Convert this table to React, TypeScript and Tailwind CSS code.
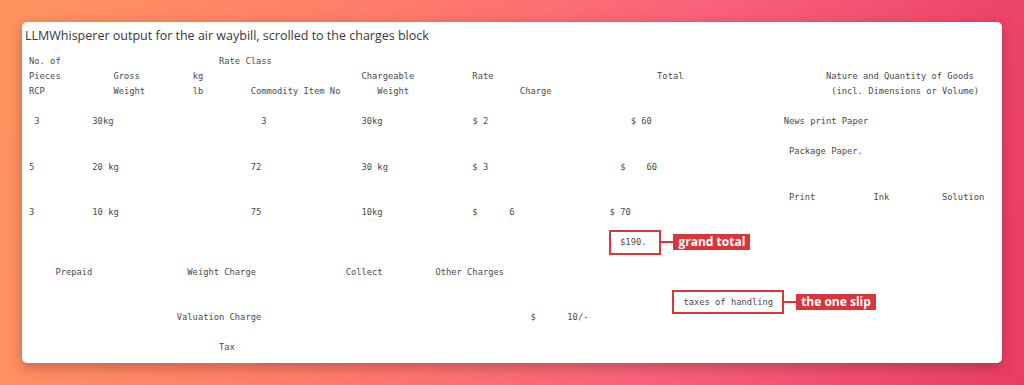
import React from "react";

type Part = [number, string, "total" | "slip" | undefined] | [number, string];

const RED = "bg-[#d8363c]";

const rows: Part[][] = [
  [[0, "No. of"], [36, "Rate Class"]],
  [
    [0, "Pieces"],
    [16, "Gross"],
    [31, "kg"],
    [63, "Chargeable"],
    [84, "Rate"],
    [119, "Total"],
    [151, "Nature and Quantity of Goods"],
  ],
  [
    [0, "RCP"],
    [16, "Weight"],
    [31, "lb"],
    [42, "Commodity Item No"],
    [66, "Weight"],
    [93, "Charge"],
    [152, "(incl. Dimensions or Volume)"],
  ],
  [],
  [[1, "3"], [12, "30kg"], [44, "3"], [63, "30kg"], [84, "$ 2"], [114, "$ 60"], [143, "News print Paper"]],
  [],
  [[144, "Package Paper."]],
  [[0, "5"], [12, "20 kg"], [42, "72"], [63, "30 kg"], [84, "$ 3"], [112, "$    60"]],
  [],
  [[144, "Print"], [160, "Ink"], [173, "Solution"]],
  [[0, "3"], [12, "10 kg"], [42, "75"], [63, "10kg"], [84, "$"], [91, "6"], [110, "$ 70"]],
  [],
  [[112, "$190.", "total"]],
  [],
  [[5, "Prepaid"], [30, "Weight Charge"], [60, "Collect"], [77, "Other Charges"]],
  [],
  [[124, "taxes of handling", "slip"]],
  [[28, "Valuation Charge"], [95, "$"], [102, "10/-"]],
  [],
  [[36, "Tax"]],
];

const Callout = ({ text, kind }: { text: string; kind: "total" | "slip" }) => {
  const box =
    kind === "total"
      ? "-left-[11px] -right-[15px] -top-[7px] -bottom-[8px]"
      : "-left-[11px] -right-[11px] -top-[7px] -bottom-[7px]";
  const label = kind === "total" ? "grand total" : "the one slip";

  return (
    <span className="relative">
      {text}
      <span className={`absolute border-2 border-[#d8363c] ${box}`}>
        <span className="absolute left-full top-1/2 -translate-y-1/2 flex items-center">
          <span className={`w-[14px] h-[2px] ${RED}`} />
          <span
            className={`${RED} text-white font-bold text-[12px] leading-[16px] px-[5px] whitespace-nowrap font-['Open_Sans',sans-serif]`}
          >
            {label}
          </span>
        </span>
      </span>
    </span>
  );
};

const Row = ({ parts }: { parts: Part[] }) => {
  let pos = 0;
  const out: React.ReactNode[] = [];
  parts.forEach((p, i) => {
    const [col, text, kind] = p;
    out.push(" ".repeat(Math.max(col - pos, 0)));
    out.push(
      kind ? <Callout key={i} text={text} kind={kind} /> : <span key={i}>{text}</span>
    );
    pos = col + text.length;
  });
  return <div className="h-[15.09px] whitespace-pre">{out}</div>;
};

export default function App() {
  return (
    <div className="w-[1024px] h-[385px] p-[22px] flex bg-[linear-gradient(100deg,#ff9560_0%,#ff7c6a_35%,#f9627a_65%,#e93d66_100%)]">
      <div className="flex-1 bg-white rounded-[5px] shadow-[0_4px_14px_rgba(90,20,20,0.35)] pt-[5px] pl-[3px]">
        <h1 className="text-[12.5px] leading-[18px] text-[#383838] font-['Open_Sans',sans-serif]">
          LLMWhisperer output for the air waybill, scrolled to the charges block
        </h1>
        <div className="mt-[9px] ml-[4px] text-[8.77px] leading-[15.09px] text-[#4a4a4a] font-['DejaVu_Sans_Mono',monospace]">
          {rows.map((r, i) => (
            <Row key={i} parts={r} />
          ))}
        </div>
      </div>
    </div>
  );
}
